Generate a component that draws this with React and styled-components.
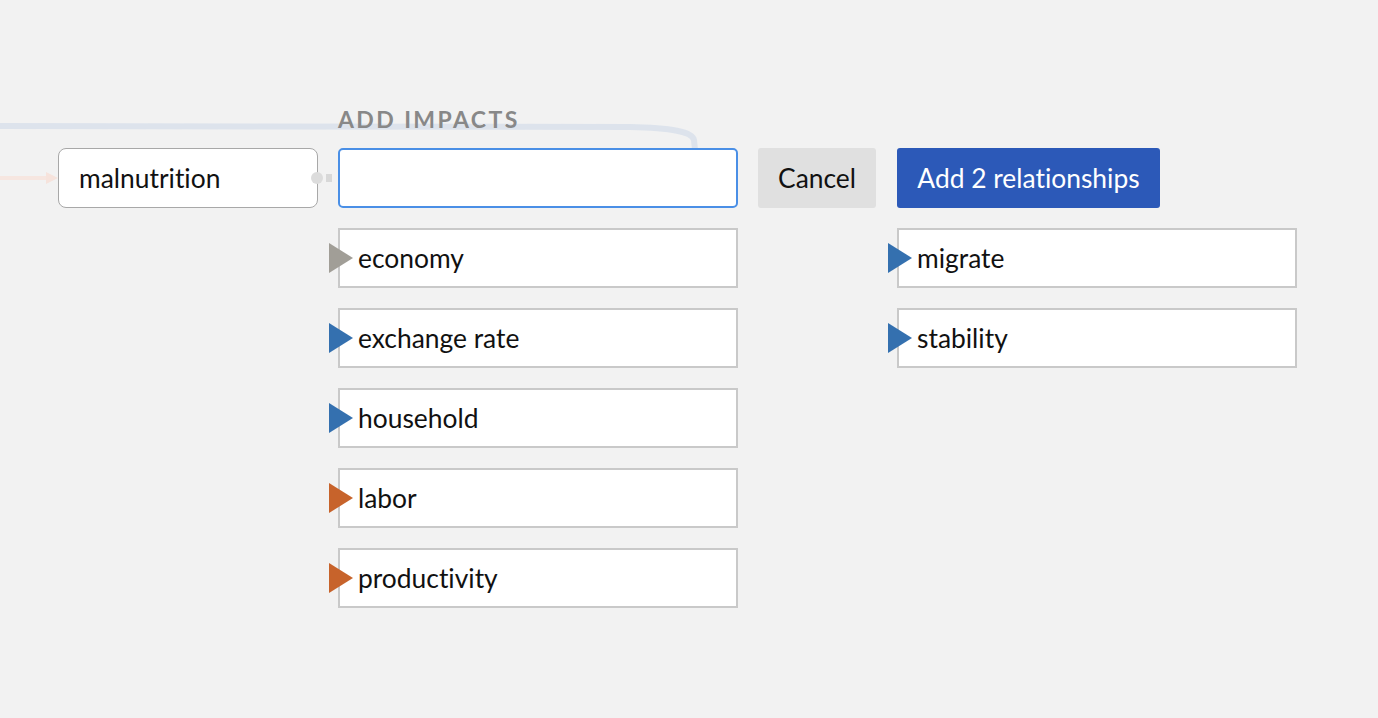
import React from "react";
import styled, { createGlobalStyle } from "styled-components";

const Global = createGlobalStyle`
  html, body { margin: 0; padding: 0; background: #f2f2f2; }
  body {
    font-family: "Lato", "Noto Sans", sans-serif;
    color: #111;
    font-variant-ligatures: none;
    font-feature-settings: "liga" 0, "clig" 0;
  }
  * { box-sizing: border-box; }
`;

const Canvas = styled.div`
  position: relative;
  width: 1378px;
  height: 718px;
  overflow: hidden;
  background: #f2f2f2;
`;

const Edges = styled.svg`
  position: absolute;
  left: 0;
  top: 0;
  width: 1378px;
  height: 718px;
  z-index: 0;
  pointer-events: none;
`;

const Layout = styled.div`
  position: relative;
  z-index: 1;
  display: grid;
  grid-template-columns: 260px 400px 119px 400px;
  column-gap: 20px;
  row-gap: 0;
  padding: 100px 0 0 58px;
`;

const Label = styled.div`
  grid-column: 2;
  grid-row: 1;
  height: 48px;
  padding-top: 5px;
  font-size: 23px;
  font-weight: 700;
  letter-spacing: 2.4px;
  color: #888;
  text-transform: uppercase;
`;

const NodeBox = styled.div`
  grid-column: 1;
  grid-row: 2;
  position: relative;
  height: 60px;
  display: flex;
  align-items: center;
  padding-left: 20px;
  background: #fff;
  border: 1px solid #a8a8a8;
  border-radius: 8px;
  font-size: 26.4px;
`;

const Port = styled.span`
  position: absolute;
  right: -15px;
  top: 50%;
  transform: translateY(-50%);
  display: flex;
  align-items: center;
  gap: 3px;
  &::before {
    content: "";
    width: 12px;
    height: 12px;
    border-radius: 50%;
    background: #dcdcdc;
  }
  &::after {
    content: "";
    width: 6px;
    height: 8px;
    background: #d8d8d8;
  }
`;

const SearchInput = styled.input`
  grid-column: 2;
  grid-row: 2;
  height: 60px;
  width: 400px;
  border: 2px solid #4a8fe6;
  border-radius: 5px;
  background: #fff;
  outline: none;
  font-size: 26px;
  padding: 0 18px;
  font-family: inherit;
`;

const Button = styled.button`
  grid-row: 2;
  grid-column: ${(p) => p.$col};
  height: 60px;
  border: none;
  border-radius: 3px;
  font-family: inherit;
  font-size: 26.4px;
  padding: 0;
  justify-self: start;
  background: ${(p) => (p.$primary ? "#2c59b8" : "#e0e0e0")};
  color: ${(p) => (p.$primary ? "#fff" : "#111")};
  width: ${(p) => p.$w};
  cursor: pointer;
  font-variant-ligatures: none;
`;

const List = styled.div`
  grid-row: 3;
  grid-column: ${(p) => p.$col};
  display: flex;
  flex-direction: column;
  gap: 20px;
  padding-top: 20px;
`;

const Item = styled.div`
  position: relative;
  height: 60px;
  display: flex;
  align-items: center;
  padding-left: 18px;
  background: #fff;
  border: 2px solid #c9c9c9;
  font-size: 26.4px;
`;

const Marker = styled.span`
  position: absolute;
  left: -11px;
  top: 50%;
  transform: translateY(-50%);
  width: 0;
  height: 0;
  border-top: 15px solid transparent;
  border-bottom: 15px solid transparent;
  border-left: 24px solid ${(p) => p.$color};
`;

const COLORS = { neutral: "#a19e97", up: "#3470af", down: "#c7632b" };

const left = [
  ["economy", "neutral"],
  ["exchange rate", "up"],
  ["household", "up"],
  ["labor", "down"],
  ["productivity", "down"],
];
const right = [
  ["migrate", "up"],
  ["stability", "up"],
];

export default function App() {
  return (
    <Canvas>
      <Global />
      <Edges viewBox="0 0 1378 718">
        <path d="M0 126 L 630 127 Q 692 128 694 140 L 695 150" fill="none" stroke="#dde3ec" strokeWidth="6" />
        <path d="M0 178 L 48 178" fill="none" stroke="#f6e6e0" strokeWidth="4" />
        <path d="M46 172 L 58 178 L 46 184 Z" fill="#f6e3dc" />
      </Edges>
      <Layout>
        <Label>Add impacts</Label>
        <NodeBox>
          malnutrition
          <Port />
        </NodeBox>
        <SearchInput />
        <Button $col={3} $w="118px">Cancel</Button>
        <Button $col={4} $primary $w="263px">Add 2 relationships</Button>
        <List $col={2}>
          {left.map(([t, c]) => (
            <Item key={t}>
              <Marker $color={COLORS[c]} />
              {t}
            </Item>
          ))}
        </List>
        <List $col={4}>
          {right.map(([t, c]) => (
            <Item key={t}>
              <Marker $color={COLORS[c]} />
              {t}
            </Item>
          ))}
        </List>
      </Layout>
    </Canvas>
  );
}
